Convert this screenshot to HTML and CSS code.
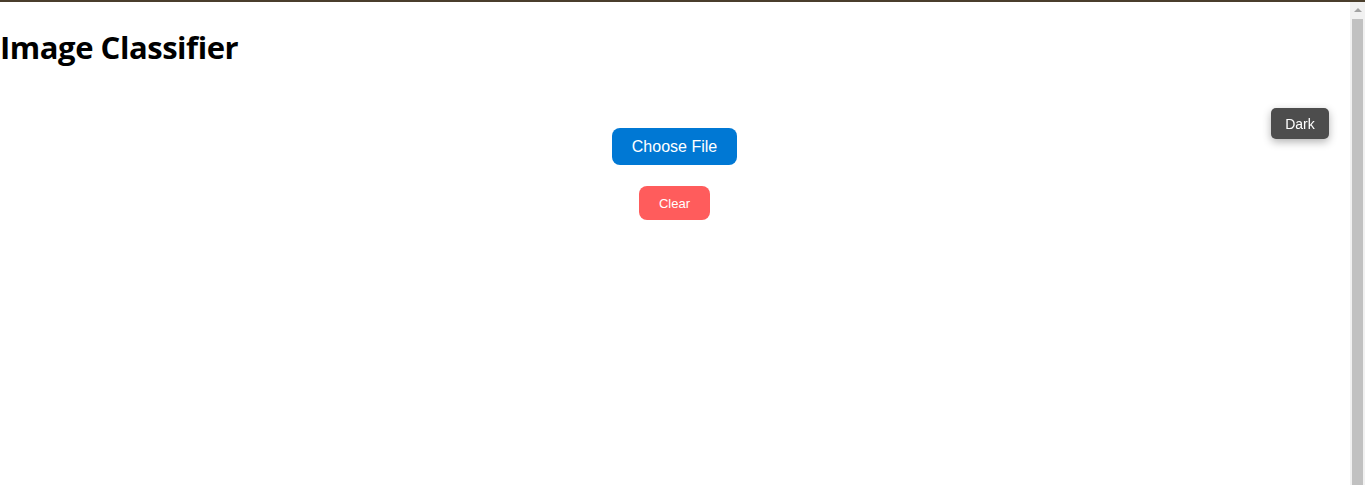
FILE: index.html
```html
<!DOCTYPE html>
<html lang="en">
<head>
<meta charset="utf-8">
<title>Image Classifier</title>
<link rel="stylesheet" href="styles.css">
</head>
<body>
<div class="topline"></div>
<div class="page">
  <h1 class="title">Image Classifier</h1>
  <main class="uploader">
    <label class="choose">Choose File</label>
    <button class="clear">Clear</button>
  </main>
</div>
<button class="theme-toggle">Dark</button>
<div class="scrollbar" aria-hidden="true">
  <div class="scroll-arrow"></div>
  <div class="scroll-thumb"></div>
</div>
</body>
</html>
```
FILE: styles.css
```css
html, body {
  margin: 0;
  padding: 0;
  overflow: hidden;
}
body {
  background: #fff;
  color: #000;
  font-family: "Open Sans", "Noto Sans", sans-serif;
  height: 485px;
}
.topline {
  height: 2px;
  background: #4a3e2c;
}
.page {
  margin-right: 16px;
}
.title {
  margin: 0;
  padding-top: 25px;
  font-size: 31px;
  line-height: 40px;
  font-weight: 700;
  letter-spacing: -0.45px;
}
.theme-toggle {
  position: fixed;
  top: 108px;
  right: 36px;
  width: 58px;
  height: 31px;
  border: none;
  border-radius: 5px;
  background: #4d4d4d;
  color: #fff;
  font-family: "Liberation Sans", Arial, sans-serif;
  font-size: 14px;
  box-shadow: 0 3px 8px rgba(0,0,0,0.3);
  padding: 0;
}
.uploader {
  display: flex;
  flex-direction: column;
  align-items: center;
  gap: 21px;
  padding-top: 61px;
}
.choose {
  display: flex;
  align-items: center;
  justify-content: center;
  width: 125px;
  height: 37px;
  border-radius: 8px;
  background: #0078d4;
  color: #fff;
  font-family: "Liberation Sans", Arial, sans-serif;
  font-size: 16px;
}
.clear {
  width: 71px;
  height: 34px;
  border: none;
  border-radius: 8px;
  background: #ff5c5c;
  color: #fff;
  font-family: "Liberation Sans", Arial, sans-serif;
  font-size: 13px;
  padding: 0;
}
.scrollbar {
  position: fixed;
  top: 2px;
  right: 0;
  bottom: 0;
  width: 15px;
  background: #f1f1f1;
  display: flex;
  flex-direction: column;
  align-items: center;
}
.scroll-arrow {
  margin-top: 6px;
  width: 0;
  height: 0;
  border-left: 4px solid transparent;
  border-right: 4px solid transparent;
  border-bottom: 4px solid #a3a3a3;
}
.scroll-thumb {
  margin-top: 7px;
  width: 11px;
  flex: 1;
  background: #c1c1c1;
}
```
